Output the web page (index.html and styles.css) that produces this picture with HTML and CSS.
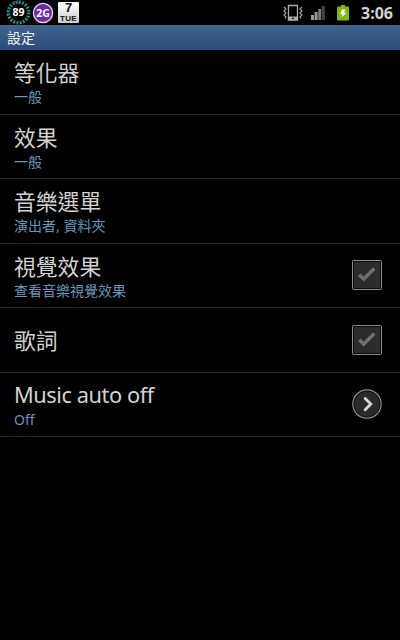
FILE: index.html
```html
<!DOCTYPE html>
<html lang="zh-Hant">
<head>
  <meta charset="UTF-8">
  <title>設定</title>
  <link rel="stylesheet" href="styles.css">
</head>
<body>

  <div class="status-bar">
    <div class="notifications">
      <svg class="icon-level" width="25" height="25" viewBox="0 0 25 25">
        <circle cx="12.5" cy="12.5" r="10.3" fill="none" stroke="#1f9486" stroke-width="3.4" stroke-dasharray="1.9 1.34"/>
        <path d="M7.5 3.5a10.3 10.3 0 0 1 5-1.3" fill="none" stroke="#444" stroke-width="3.6" stroke-dasharray="1.9 1.34"/>
        <text x="12.5" y="16.4" text-anchor="middle" class="level-text">89</text>
      </svg>
      <svg class="icon-2g" width="22" height="22" viewBox="0 0 22 22">
        <circle cx="11" cy="11" r="9.6" fill="#6d28a8" stroke="#e2dcea" stroke-width="1.3"/>
        <text x="11" y="14.8" text-anchor="middle" class="network-text">2G</text>
      </svg>
      <div class="calendar">
        <span class="day">7</span>
        <span class="weekday">TUE</span>
      </div>
    </div>

    <div class="system">
      <svg class="icon-vibrate" width="20" height="18" viewBox="0 0 20 18">
        <path d="M5.5 1.5h9v14.6h-9z" fill="none" stroke="#aaa" stroke-width="1.3"/>
        <path d="M5.5 12.5h9v3.6h-9z" fill="#aaa"/>
        <path d="M9 13.7h2v1.2H9z" fill="#111"/>
        <path d="M1 3l2 2-2 2 2 2-2 2 2 2-1 1.5M19 3l-2 2 2 2-2 2 2 2-2 2 1 1.5" fill="none" stroke="#aaa" stroke-width="1.1"/>
      </svg>
      <svg class="icon-signal" width="14" height="14" viewBox="0 0 14 14">
        <path d="M0 9h3v5H0zM3.6 6h3v8h-3z" fill="#999"/>
        <path d="M7.2 3h3v11h-3z" fill="#777"/>
        <path d="M10.8 0h3v14h-3z" fill="#444"/>
      </svg>
      <svg class="icon-battery" width="12" height="16" viewBox="0 0 12 16">
        <path d="M4 0h4v2H4z" fill="#999"/>
        <rect x="0" y="1.5" width="12" height="14" rx="1" fill="#82b80c"/>
        <path d="M5 4.5h3.4L7 7.8h2.4L4.4 12.6l1.1-3.6H3.2z" fill="#fff"/>
      </svg>
      <span class="clock">3:06</span>
    </div>
  </div>

  <h1 class="title-bar">設定</h1>

  <ul class="settings">
    <li class="item">
      <div class="label">
        <div class="name">等化器</div>
        <div class="summary">一般</div>
      </div>
    </li>
    <li class="item">
      <div class="label">
        <div class="name">效果</div>
        <div class="summary">一般</div>
      </div>
    </li>
    <li class="item">
      <div class="label">
        <div class="name">音樂選單</div>
        <div class="summary">演出者, 資料夾</div>
      </div>
    </li>
    <li class="item">
      <div class="label">
        <div class="name">視覺效果</div>
        <div class="summary">查看音樂視覺效果</div>
      </div>
      <svg class="control" width="30" height="30" viewBox="0 0 30 30">
        <rect x="0.5" y="0.5" width="29" height="29" rx="1" fill="#0c0c0c" stroke="#8c8c8c"/>
        <rect x="2" y="2" width="26" height="26" fill="#2c2c2c"/>
        <path d="M7.3 14.8l4.4 4.2L22.3 8.6" fill="none" stroke="#707070" stroke-width="3.5"/>
      </svg>
    </li>
    <li class="item">
      <div class="label">
        <div class="name">歌詞</div>
      </div>
      <svg class="control" width="30" height="30" viewBox="0 0 30 30">
        <rect x="0.5" y="0.5" width="29" height="29" rx="1" fill="#0c0c0c" stroke="#8c8c8c"/>
        <rect x="2" y="2" width="26" height="26" fill="#2c2c2c"/>
        <path d="M7.3 14.8l4.4 4.2L22.3 8.6" fill="none" stroke="#707070" stroke-width="3.5"/>
      </svg>
    </li>
    <li class="item">
      <div class="label">
        <div class="name latin">Music auto off</div>
        <div class="summary">Off</div>
      </div>
      <svg class="control" width="30" height="30" viewBox="0 0 30 30">
        <circle cx="15" cy="15" r="14.2" fill="#0c0c0c" stroke="#8c8c8c" stroke-width="1.2"/>
        <circle cx="15" cy="15" r="12.6" fill="#2a2a2a"/>
        <path d="M13.2 9.4l5.6 5.6-5.6 5.8" fill="none" stroke="#d8d8d8" stroke-width="2.8" stroke-linecap="round"/>
      </svg>
    </li>
  </ul>

</body>
</html>
```

FILE: styles.css
```css
body {
  margin: 0;
  height: 640px;
  overflow: hidden;
  background-color: #000;
  color: #d2d2d2;
  font-family: "Noto Sans", "Noto Sans CJK TC", sans-serif;
}

.status-bar {
  display: flex;
  justify-content: space-between;
  height: 25px;
}

.notifications,
.system {
  display: flex;
  align-items: center;
}

.notifications {
  padding-left: 6px;
}

.level-text {
  font-size: 10.5px;
  font-weight: bold;
  fill: #fff;
}

.icon-2g {
  margin-left: 1px;
}

.network-text {
  font-size: 10.5px;
  font-weight: bold;
  fill: #fff;
}

.calendar {
  display: flex;
  flex-direction: column;
  align-items: center;
  width: 21px;
  height: 21px;
  margin-left: 4px;
  border-radius: 1px;
  background: linear-gradient(#fff, #ccc);
  color: #111;
  font-family: "Liberation Sans", sans-serif;
  font-weight: bold;
}

.day {
  font-size: 13px;
  line-height: 12px;
}

.weekday {
  font-size: 8px;
  line-height: 10px;
  letter-spacing: 0.3px;
}

.system {
  padding-right: 7px;
}

.icon-signal {
  margin-left: 8px;
}

.icon-battery {
  margin-left: 12px;
}

.clock {
  margin-left: 12px;
  padding-top: 1px;
  font-size: 16px;
  font-weight: bold;
  line-height: 25px;
}

.title-bar {
  box-sizing: border-box;
  height: 25px;
  margin: 0;
  padding-left: 7px;
  background: linear-gradient(#41648f, #2c4d7c);
  color: #f0f0f0;
  font-size: 14px;
  font-weight: normal;
  line-height: 25px;
}

.settings {
  margin: 0;
  padding: 0;
  list-style: none;
}

.item {
  display: flex;
  justify-content: space-between;
  align-items: center;
  box-sizing: border-box;
  height: 64.5px;
  padding: 0 18px 0 14px;
  border-bottom: 1px solid #252525;
}

.label {
  padding-top: 3px;
}

.name {
  font-size: 21.8px;
  line-height: 28px;
}

.summary {
  color: #6795b8;
  font-size: 14px;
  line-height: 20px;
}

.latin {
  margin: -1px 0 1px;
  letter-spacing: -0.45px;
}

.control {
  flex: none;
}
```
